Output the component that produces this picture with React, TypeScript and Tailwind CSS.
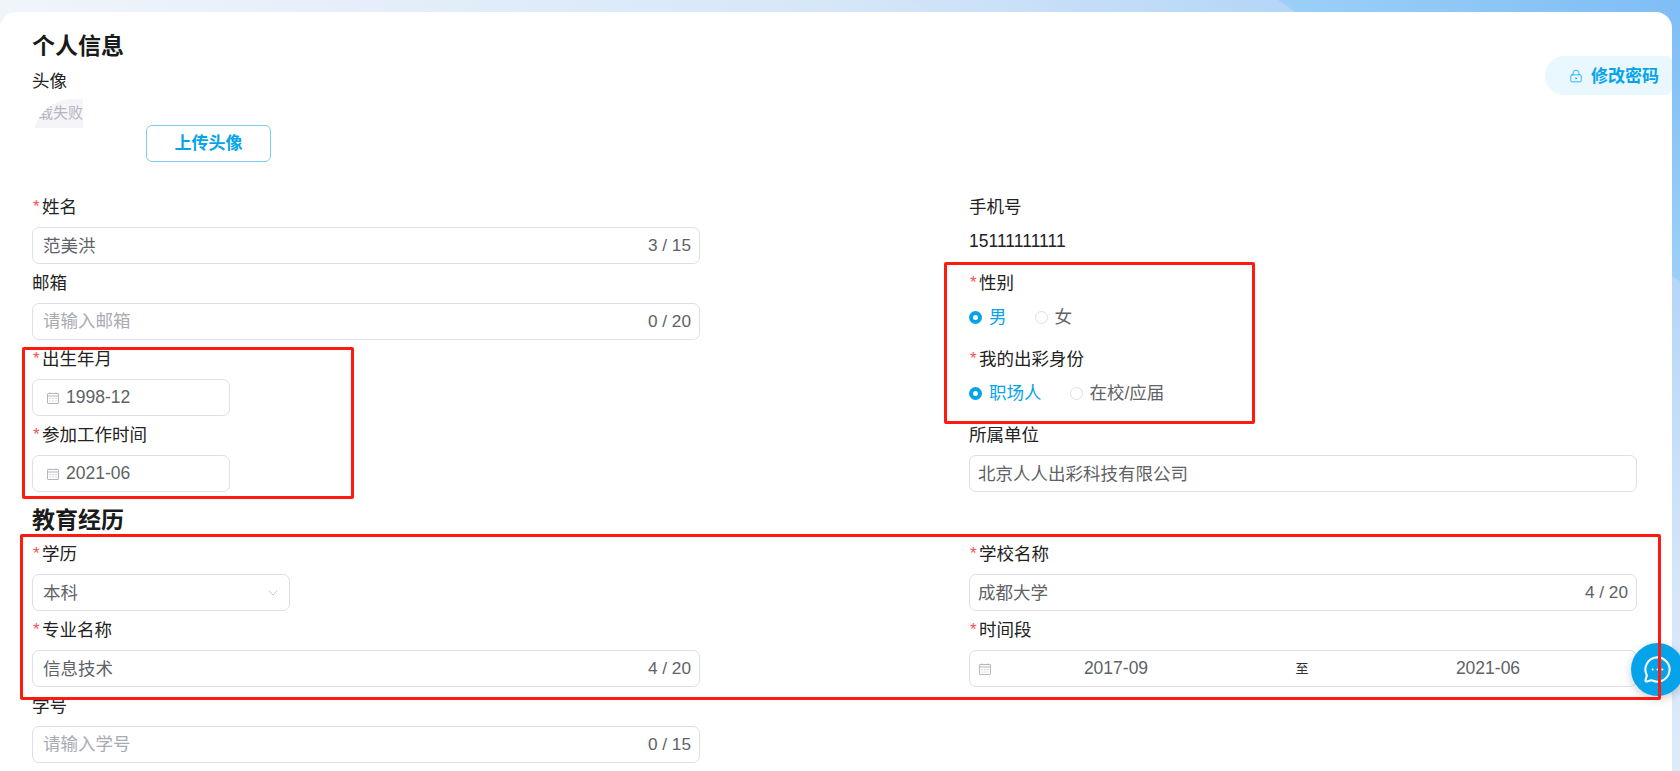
import { ReactNode } from 'react';
import { ChevronDown, LockKeyhole, MessageCircleMore } from 'lucide-react';

function CalendarIcon() {
  return (
    <svg width="12" height="12" viewBox="0 0 12 12" fill="none" stroke="#b4b7be" strokeWidth="1" className="shrink-0">
      <rect x="0.5" y="1.5" width="11" height="10" rx="0.5" />
      <path d="M0.5 4h11M3 0.5v1.5M9 0.5v1.5" />
      <path d="M2.5 6.5h1M5.5 6.5h1M8.5 6.5h1M2.5 9h1M5.5 9h1M8.5 9h1" />
    </svg>
  );
}

function Field({ label, required, children }: { label: string; required?: boolean; children: ReactNode }) {
  return (
    <div className="h-[76px]">
      <div className="h-[38px] pb-[2px] flex items-center text-[17.5px] text-[#222]">
        {required && <span className="w-[10px] h-[20px] text-[#f4505a] leading-[20px] text-[17px] pl-[1px]">*</span>}
        <span>{label}</span>
      </div>
      {children}
    </div>
  );
}

function TextBox({ value, placeholder, count, right }: { value?: string; placeholder?: string; count?: string; right?: boolean }) {
  return (
    <div className={`w-[668px] h-[37px] border border-[#dcdfe6] rounded-[7px] pr-[8px] flex items-center justify-between text-[17.5px] ${right ? 'pl-[8px]' : 'pl-[10px]'}`}>
      {value ? <span className="pt-[2px] text-[#606266]">{value}</span> : <span className="text-[#a8abb2]">{placeholder}</span>}
      {count && <span className="text-[#606266] text-[17.2px]">{count}</span>}
    </div>
  );
}

function DateBox({ value }: { value: string }) {
  return (
    <div className="w-[198px] h-[37px] border border-[#dcdfe6] rounded-[7px] pl-[14px] flex items-center gap-[7px] text-[17.5px] text-[#606266]">
      <CalendarIcon />
      <span>{value}</span>
    </div>
  );
}

function Radio({ label, checked }: { label: string; checked?: boolean }) {
  return (
    <div className="flex items-center gap-[7px]">
      {checked ? (
        <span className="w-[13px] h-[13px] rounded-full bg-[#05a4ea] flex items-center justify-center">
          <span className="w-[5px] h-[5px] rounded-full bg-white" />
        </span>
      ) : (
        <span className="w-[13px] h-[13px] rounded-full border border-[#dcdfe6] bg-white" />
      )}
      <span className={checked ? 'text-[#05a4ea]' : 'text-[#606266]'}>{label}</span>
    </div>
  );
}

export default function App() {
  return (
    <div className="relative h-[771px] overflow-hidden pt-[12px] pr-[8px] font-['Liberation_Sans','Noto_Sans_CJK_SC',sans-serif] bg-[linear-gradient(35deg,#f0f4fb_40%,#d5e6f8_70%,#b5d6f8_85.5%,#9bcff7_85.6%,#7fbdf5_100%)]">
      <div className="relative h-[800px] bg-white rounded-[16px] pl-[32px] pt-[19px] overflow-hidden">
        <h1 className="h-[30px] leading-[30px] text-[23px] font-bold text-[#1a1a1a]">个人信息</h1>
        <div className="mt-[8px] h-[24px] leading-[24px] text-[17.5px] text-[#222]">头像</div>
        <div className="mt-[6px] h-[90px] flex items-start">
          <div className="ml-[1px] w-[50px] h-[29px] overflow-hidden">
            <div className="h-[48px] bg-[#f4f4f9] rounded-tl-[40px] overflow-hidden">
              <div className="h-[29px] flex justify-end items-center text-[15px] text-[#b4b7be] whitespace-nowrap">
                <span className="shrink-0">加载失败</span>
              </div>
            </div>
          </div>
          <button className="ml-[63px] mt-[26px] w-[125px] h-[37px] border border-[#7dcbf0] rounded-[6px] text-[17px] font-bold text-[#05a4ea]">
            上传头像
          </button>
        </div>

        <div className="flex">
          <div className="w-[937px]">
            <Field label="姓名" required>
              <TextBox value="范美洪" count="3 / 15" />
            </Field>
            <Field label="邮箱">
              <TextBox placeholder="请输入邮箱" count="0 / 20" />
            </Field>
            <Field label="出生年月" required>
              <DateBox value="1998-12" />
            </Field>
            <Field label="参加工作时间" required>
              <DateBox value="2021-06" />
            </Field>
          </div>
          <div className="w-[668px]">
            <Field label="手机号">
              <div className="h-[28px] leading-[28px] text-[17.5px] text-[#222]">15111111111</div>
            </Field>
            <Field label="性别" required>
              <div className="h-[28px] flex items-center gap-[28px] text-[17.5px]">
                <Radio label="男" checked />
                <Radio label="女" />
              </div>
            </Field>
            <Field label="我的出彩身份" required>
              <div className="h-[28px] flex items-center gap-[28px] text-[17.5px]">
                <Radio label="职场人" checked />
                <Radio label="在校/应届" />
              </div>
            </Field>
            <Field label="所属单位">
              <TextBox value="北京人人出彩科技有限公司" right />
            </Field>
          </div>
        </div>

        <h2 className="h-[43px] pt-[12px] leading-[30px] text-[23px] font-bold text-[#1a1a1a]">教育经历</h2>

        <div className="flex">
          <div className="w-[937px]">
            <Field label="学历" required>
              <div className="w-[258px] h-[37px] border border-[#dcdfe6] rounded-[7px] pl-[10px] pr-[8px] flex items-center justify-between text-[17.5px] text-[#606266]">
                <span className="pt-[2px]">本科</span>
                <ChevronDown size={16} strokeWidth={1} className="text-[#a8abb2]" />
              </div>
            </Field>
            <Field label="专业名称" required>
              <TextBox value="信息技术" count="4 / 20" />
            </Field>
            <Field label="学号">
              <TextBox placeholder="请输入学号" count="0 / 15" />
            </Field>
          </div>
          <div className="w-[668px]">
            <Field label="学校名称" required>
              <TextBox value="成都大学" count="4 / 20" right />
            </Field>
            <Field label="时间段" required>
              <div className="w-[668px] h-[37px] border border-[#dcdfe6] rounded-[7px] pl-[9px] pr-[27px] flex items-center text-[17.5px] text-[#606266]">
                <CalendarIcon />
                <span className="w-[242px] ml-[4px] text-center">2017-09</span>
                <span className="flex-1 text-center text-[13px] text-[#303133]">至</span>
                <span className="w-[242px] text-center">2021-06</span>
              </div>
            </Field>
          </div>
        </div>

        <div className="absolute top-[44px] right-0 w-[127px] h-[39px] bg-[#e9f7fe] rounded-l-[20px] rounded-r-[6px] flex items-center pl-[24px] gap-[8px] text-[17px] font-bold text-[#05a4ea]">
          <LockKeyhole size={14} strokeWidth={1.3} />
          <span className="pt-[2px]">修改密码</span>
        </div>
      </div>

      <div className="absolute left-[1631px] top-[643px] w-[53px] h-[53px] rounded-full bg-[#05a4ea] shadow-[0_3px_10px_rgba(0,0,0,0.2)] flex items-center justify-center text-white">
        <MessageCircleMore size={29} strokeWidth={1.7} />
      </div>

      <div className="absolute left-[22px] top-[347px] w-[332px] h-[152px] border-[3px] border-[#ff1a0f] rounded-[2px]" />
      <div className="absolute left-[944px] top-[262px] w-[311px] h-[162px] border-[3px] border-[#ff1a0f] rounded-[2px]" />
      <div className="absolute left-[20px] top-[534px] w-[1641px] h-[166px] border-[3px] border-[#ff1a0f] rounded-[2px]" />
    </div>
  );
}
